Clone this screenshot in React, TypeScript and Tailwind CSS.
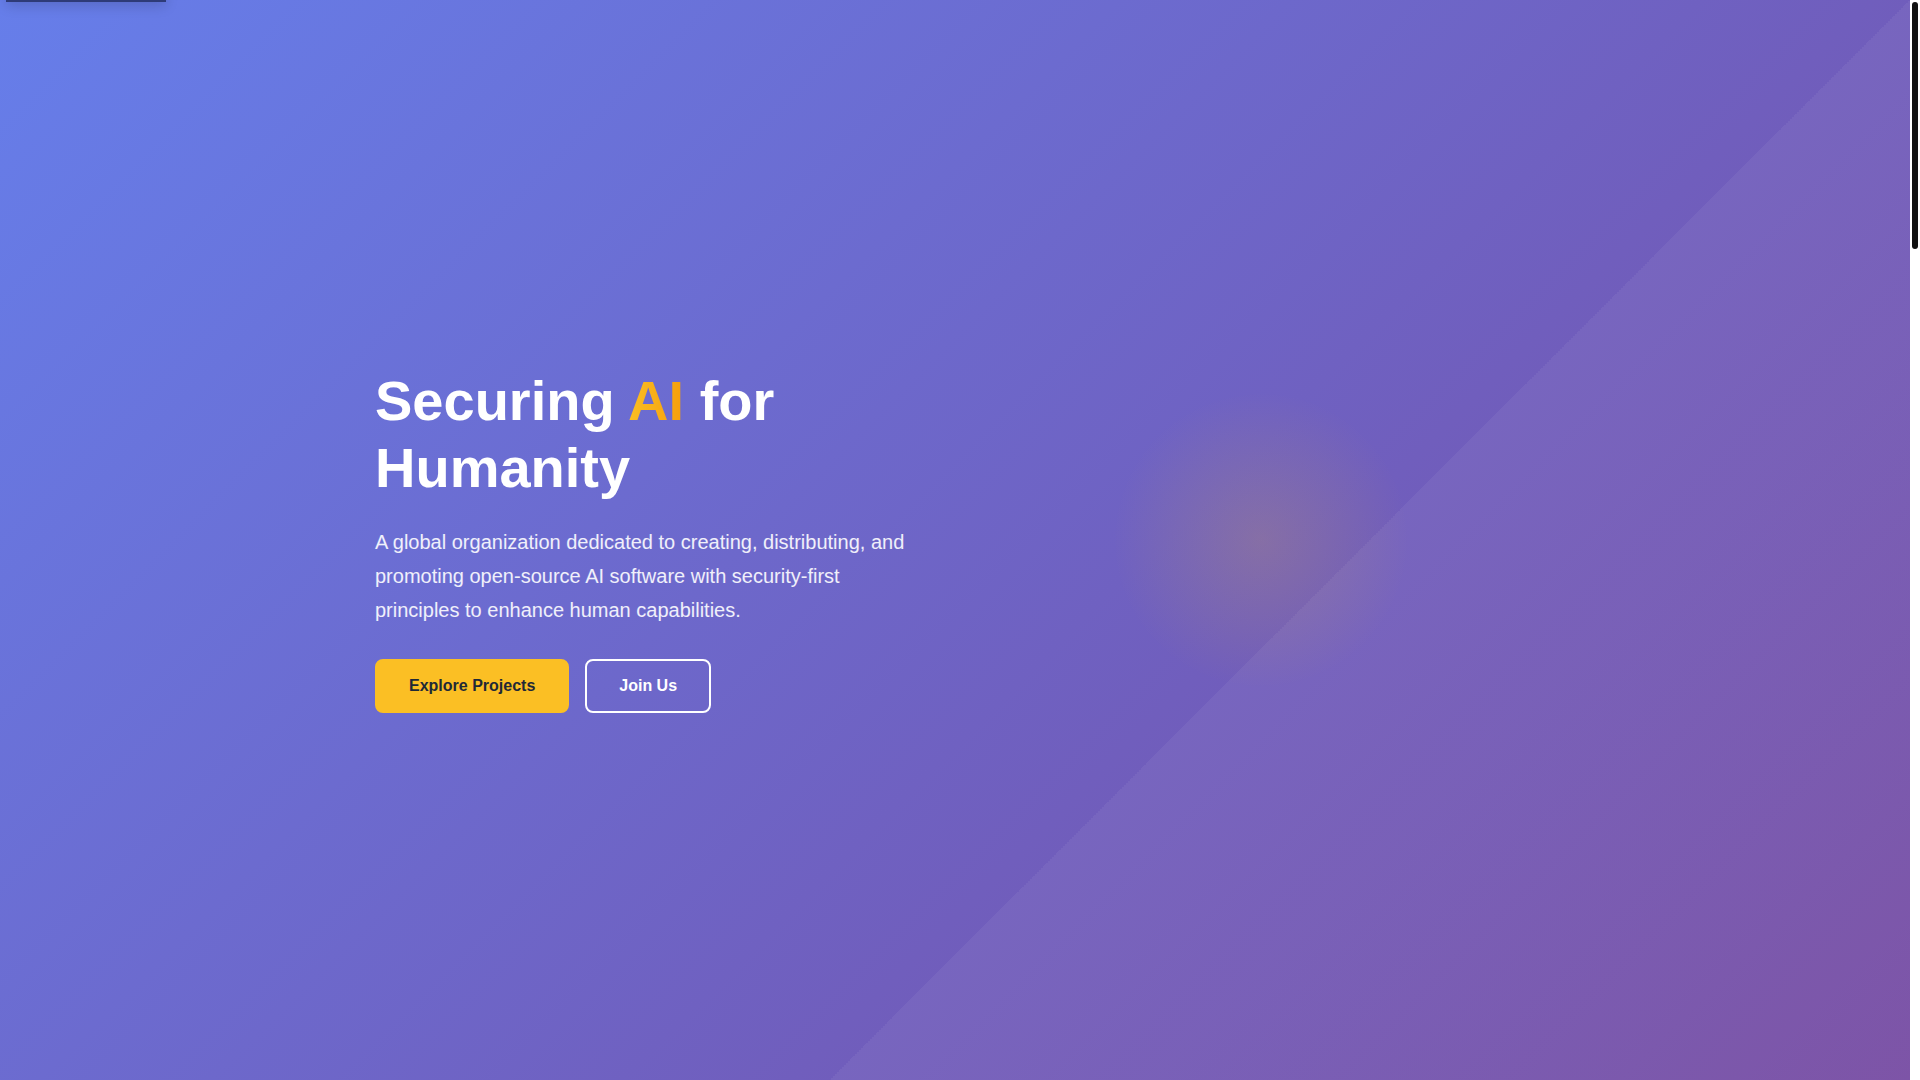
import React from 'react';
import { Shield, Code2, Globe, Users, Lock, Eye, Scale, Heart } from 'lucide-react';

const projects = [
  { icon: Shield, title: 'SecureML Toolkit', text: 'Libraries for hardening machine learning pipelines against adversarial attacks and data poisoning.' },
  { icon: Code2, title: 'Open Model Audit', text: 'Transparent tooling to inspect, test and document the behaviour of open-source AI models.' },
  { icon: Globe, title: 'Global AI Commons', text: 'A shared registry of vetted datasets and models, distributed freely for researchers everywhere.' },
];

const principles = [
  { icon: Lock, title: 'Security First', text: 'Every release is threat-modelled, reviewed and signed before it reaches users.' },
  { icon: Eye, title: 'Transparency', text: 'Open code, open processes and open governance for everything we build.' },
  { icon: Scale, title: 'Accountability', text: 'Clear ownership and public disclosure of issues and their fixes.' },
  { icon: Heart, title: 'Human-Centred', text: 'Technology designed to extend human capabilities, not replace them.' },
];

const App = () => {
  return (
    <div className="relative font-['Liberation_Sans',Arial,sans-serif] text-gray-800">
      {/* Scrollbar strip */}
      <div className="fixed right-0 top-0 z-50 h-screen w-[10px] bg-white">
        <div className="ml-[2px] mt-[2px] h-[247px] w-[6px] rounded-full bg-[#111]" />
      </div>

      <div className="relative mr-[10px]">
        {/* Skip link (hidden above viewport) */}
        <a
          href="#main"
          className="absolute left-[6px] top-[-40px] z-50 flex h-[42px] w-[160px] items-center justify-center bg-[#2e3b78] text-sm text-white shadow-[0_4px_12px_rgba(0,0,0,0.15)]"
        >
          Skip to main content
        </a>

        {/* Hero */}
        <section
          id="main"
          className="relative flex min-h-screen items-center overflow-hidden bg-[linear-gradient(135deg,#667eea_0%,#764ba2_100%)]"
        >
          <div className="pointer-events-none absolute right-0 top-0 h-full aspect-square bg-[linear-gradient(to_bottom_right,transparent_50%,rgba(255,255,255,0.05)_50%)]" />

          <div className="relative z-10 mx-auto grid w-full max-w-[1200px] grid-cols-2 items-center gap-16 px-[20px]">
            <div>
              <h1 className="text-[56px] font-bold leading-[1.2] text-white">
                Securing{' '}
                <span className="bg-[linear-gradient(90deg,#fbbf24,#f59e0b)] bg-clip-text text-transparent">
                  AI
                </span>{' '}
                for Humanity
              </h1>
              <p className="mt-6 text-[20px] leading-[1.7] text-white/90">
                A global organization dedicated to creating, distributing, and
                promoting open-source AI software with security-first principles
                to enhance human capabilities.
              </p>
              <div className="mt-8 flex gap-4">
                <a
                  href="#projects"
                  className="rounded-lg border-2 border-[#fbbf24] bg-[#fbbf24] px-8 py-4 text-base font-bold leading-[1.15] text-[#1f2937]"
                >
                  Explore Projects
                </a>
                <a
                  href="#join"
                  className="rounded-lg border-2 border-white px-8 py-4 text-base font-bold leading-[1.15] text-white"
                >
                  Join Us
                </a>
              </div>
            </div>

            <div className="flex h-[400px] items-center justify-center">
              <div className="h-[300px] w-[300px] rounded-full bg-[radial-gradient(circle,rgba(251,191,36,0.16)_0%,rgba(251,191,36,0.06)_45%,transparent_70%)]" />
            </div>
          </div>
        </section>

        {/* About */}
        <section className="min-h-[800px] bg-white py-24">
          <div className="mx-auto max-w-[1200px] px-[20px]">
            <h2 className="text-center text-4xl font-bold text-gray-900">About Us</h2>
            <p className="mx-auto mt-6 max-w-[720px] text-center text-lg leading-relaxed text-gray-600">
              We bring together engineers, researchers and policy experts to make
              artificial intelligence safe, open and beneficial for everyone.
            </p>
            <div className="mt-16 grid grid-cols-3 gap-8">
              {['Open Source', 'Security Research', 'Education'].map((t) => (
                <div key={t} className="rounded-xl bg-gray-50 p-8 shadow-sm">
                  <h3 className="text-xl font-bold text-gray-900">{t}</h3>
                  <p className="mt-3 text-gray-600">
                    Building trustworthy foundations for the next generation of AI
                    systems.
                  </p>
                </div>
              ))}
            </div>
          </div>
        </section>

        {/* Projects */}
        <section id="projects" className="min-h-[1000px] bg-gray-50 py-24">
          <div className="mx-auto max-w-[1200px] px-[20px]">
            <h2 className="text-center text-4xl font-bold text-gray-900">Our Projects</h2>
            <div className="mt-16 grid grid-cols-3 gap-8">
              {projects.map((p) => (
                <div key={p.title} className="rounded-xl bg-white p-8 shadow">
                  <p.icon size={36} className="text-[#667eea]" />
                  <h3 className="mt-4 text-xl font-bold text-gray-900">{p.title}</h3>
                  <p className="mt-3 text-gray-600">{p.text}</p>
                </div>
              ))}
            </div>
          </div>
        </section>

        {/* Principles */}
        <section className="min-h-[800px] bg-white py-24">
          <div className="mx-auto max-w-[1200px] px-[20px]">
            <h2 className="text-center text-4xl font-bold text-gray-900">Our Principles</h2>
            <div className="mt-16 grid grid-cols-4 gap-8">
              {principles.map((p) => (
                <div key={p.title} className="text-center">
                  <div className="mx-auto flex h-16 w-16 items-center justify-center rounded-full bg-[#667eea]/10">
                    <p.icon size={28} className="text-[#764ba2]" />
                  </div>
                  <h3 className="mt-4 text-lg font-bold text-gray-900">{p.title}</h3>
                  <p className="mt-2 text-gray-600">{p.text}</p>
                </div>
              ))}
            </div>
          </div>
        </section>

        {/* Join */}
        <section
          id="join"
          className="min-h-[620px] bg-[linear-gradient(135deg,#667eea_0%,#764ba2_100%)] py-24 text-center text-white"
        >
          <Users size={48} className="mx-auto" />
          <h2 className="mt-6 text-4xl font-bold">Join the Community</h2>
          <p className="mx-auto mt-4 max-w-[600px] text-lg text-white/90">
            Contribute code, share research, or help us shape the future of secure
            open-source AI.
          </p>
        </section>

        {/* Footer */}
        <footer className="h-[420px] bg-[#1f2937] py-16 text-gray-400">
          <div className="mx-auto max-w-[1200px] px-[20px]">
            <p className="text-lg font-bold text-white">Securing AI for Humanity</p>
            <p className="mt-4">© 2024 All rights reserved.</p>
          </div>
        </footer>
      </div>
    </div>
  );
};

export default App;
